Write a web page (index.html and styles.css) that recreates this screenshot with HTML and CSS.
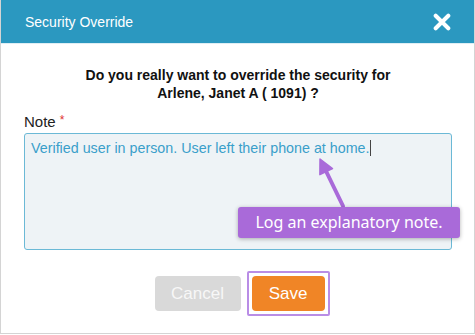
FILE: index.html
```html
<!DOCTYPE html>
<html lang="en">

<head>
    <meta charset="UTF-8">
    <title>Security Override</title>
    <link rel="stylesheet" href="styles.css">
</head>

<body>
    <div class="modal">
        <div class="modal-header">
            <span class="modal-title">Security Override</span>
            <svg class="close-icon" viewBox="0 0 20 20" width="18" height="18">
                <path d="M3 3 L17 17 M17 3 L3 17" stroke="#fff" stroke-width="4.5" stroke-linecap="round"/>
            </svg>
        </div>
        <div class="modal-body">
            <p class="question">Do you really want to override the security for<br>Arlene, Janet A ( 1091) ?</p>
            <label class="note-label">Note <span class="required">*</span></label>
            <div class="note-wrap">
                <div class="note-box">Verified user in person. User left their phone at home.<span class="caret"></span></div>
                <svg class="arrow" width="50" height="60" viewBox="0 0 50 60">
                    <path d="M15 16 L33 53" stroke="#a96ad9" stroke-width="4" stroke-linecap="round"/>
                    <path d="M10 6 L22.5 15.5 L9.9 21.7 Z" fill="#a96ad9" stroke="#a96ad9" stroke-width="1.5" stroke-linejoin="round"/>
                </svg>
                <div class="callout">Log an explanatory note.</div>
            </div>
        </div>
        <div class="modal-footer">
            <button class="btn btn-cancel">Cancel</button>
            <div class="highlight">
                <button class="btn btn-save">Save</button>
            </div>
        </div>
    </div>
</body>

</html>
```

FILE: styles.css
```css
body {
    margin: 0;
    font-family: "Liberation Sans", Arial, sans-serif;
    background-color: #fff;
}

.modal {
    width: 473px;
    height: 333px;
    border: 1px solid #d4d4d4;
    border-top: none;
    background-color: #fff;
    display: flex;
    flex-direction: column;
}

.modal-header {
    height: 43px;
    background-color: #2b98c0;
    display: flex;
    align-items: center;
    justify-content: space-between;
    padding: 0 23px 0 24px;
    border-bottom: 1px solid #dfeef4;
}

.modal-title {
    color: #fff;
    font-size: 14px;
}

.close-icon {
    display: block;
}

.modal-body {
    padding: 0 22px 0 23px;
}

.question {
    margin: 22px 0 11px;
    text-align: center;
    font-weight: bold;
    font-size: 14px;
    line-height: 18px;
    color: #111;
}

.note-label {
    display: block;
    font-size: 15px;
    color: #222;
    margin-bottom: 3px;
}

.required {
    color: #e03030;
    font-size: 12px;
    vertical-align: top;
}

.note-wrap {
    position: relative;
}

.note-box {
    height: 105px;
    background-color: #eef3f6;
    border: 1px solid #6bb9d6;
    border-radius: 3px;
    padding: 5px 6px;
    color: #3a9fca;
    font-size: 14.3px;
    line-height: 18px;
}

.caret {
    display: inline-block;
    width: 1px;
    height: 16px;
    background-color: #444;
    vertical-align: -3px;
}

.arrow {
    position: absolute;
    left: 286px;
    top: 20px;
}

.callout {
    position: absolute;
    left: 214px;
    top: 74px;
    width: 222px;
    height: 31px;
    background-color: #a96ad9;
    border-radius: 3px;
    box-shadow: 0 1px 4px rgba(0, 0, 0, 0.3);
    color: #fff;
    font-family: "Noto Sans", sans-serif;
    font-size: 16px;
    line-height: 31px;
    text-align: center;
}

.modal-footer {
    display: flex;
    justify-content: center;
    align-items: center;
    gap: 6px;
    margin-top: 21px;
    padding-left: 9px;
}

.btn {
    border: none;
    border-radius: 4px;
    height: 35px;
    font-family: "Liberation Sans", Arial, sans-serif;
    font-size: 17px;
    color: #fff;
}

.btn-cancel {
    width: 86px;
    background-color: #d9d9d9;
    color: #f7f7f7;
}

.highlight {
    border: 2px solid #b98de6;
    padding: 3px;
    border-radius: 2px;
}

.btn-save {
    display: block;
    width: 73px;
    background-color: #f08526;
}
```
